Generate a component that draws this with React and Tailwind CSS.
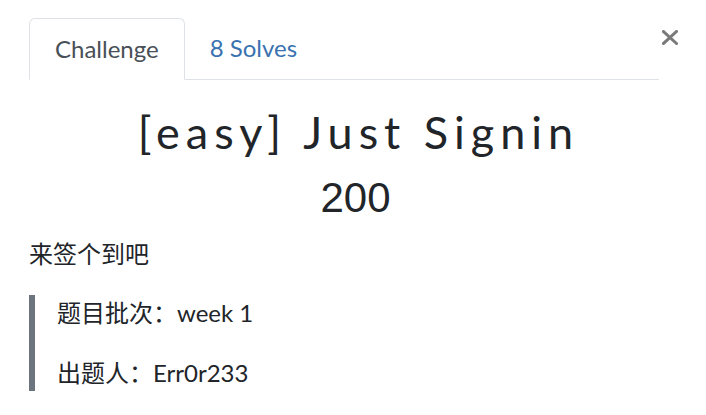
import React from 'react';

const font = { fontFamily: 'Lato, "Noto Sans CJK SC", sans-serif' };

const Tabs = () => (
    <div className="flex items-end h-[62px] border-b border-[#dee2e6] mr-[23px]">
        <div className="h-[62px] -mb-px px-[25px] flex items-center bg-white border border-[#dee2e6] border-b-white rounded-t-[6px] text-[24px] text-[#495057]">
            Challenge
        </div>
        <div className="h-[62px] px-[25px] flex items-center text-[24px] text-[#3a72b0]">
            8 Solves
        </div>
    </div>
);

export default function App() {
    return (
        <div className="relative w-[706px] h-[415px] bg-white overflow-hidden text-[#212529]" style={font}>
            {/* close button */}
            <button className="absolute left-[662px] top-[30px] w-[16px] h-[15px]">
                <svg width="16" height="15" viewBox="0 0 16 15">
                    <path d="M1.5 1.5 L14.5 13.5 M14.5 1.5 L1.5 13.5" stroke="#7a7a7a" strokeWidth="3" strokeLinecap="square" />
                </svg>
            </button>

            <div className="pt-[18px] pl-[29px] pr-[24px]">
                <Tabs />

                <h3 className="mt-[26px] pl-[6px] text-center text-[45px] leading-[52px] tracking-[6px] font-normal">
                    [easy] Just Signin
                </h3>
                <h4 className="mt-[15px] text-center text-[42px] leading-[50px] font-normal" style={{ fontFamily: '"Liberation Sans", Arial, sans-serif' }}>
                    200
                </h4>

                <p className="mt-[13px] text-[24px] leading-[36px]">来签个到吧</p>

                <blockquote className="mt-[23px] border-l-[6px] border-[#6c757d] pl-[22px] text-[24px] leading-[36px]">
                    <p className="mb-[24px]">题目批次：week 1</p>
                    <p>出题人：Err0r233</p>
                </blockquote>
            </div>
        </div>
    );
}
